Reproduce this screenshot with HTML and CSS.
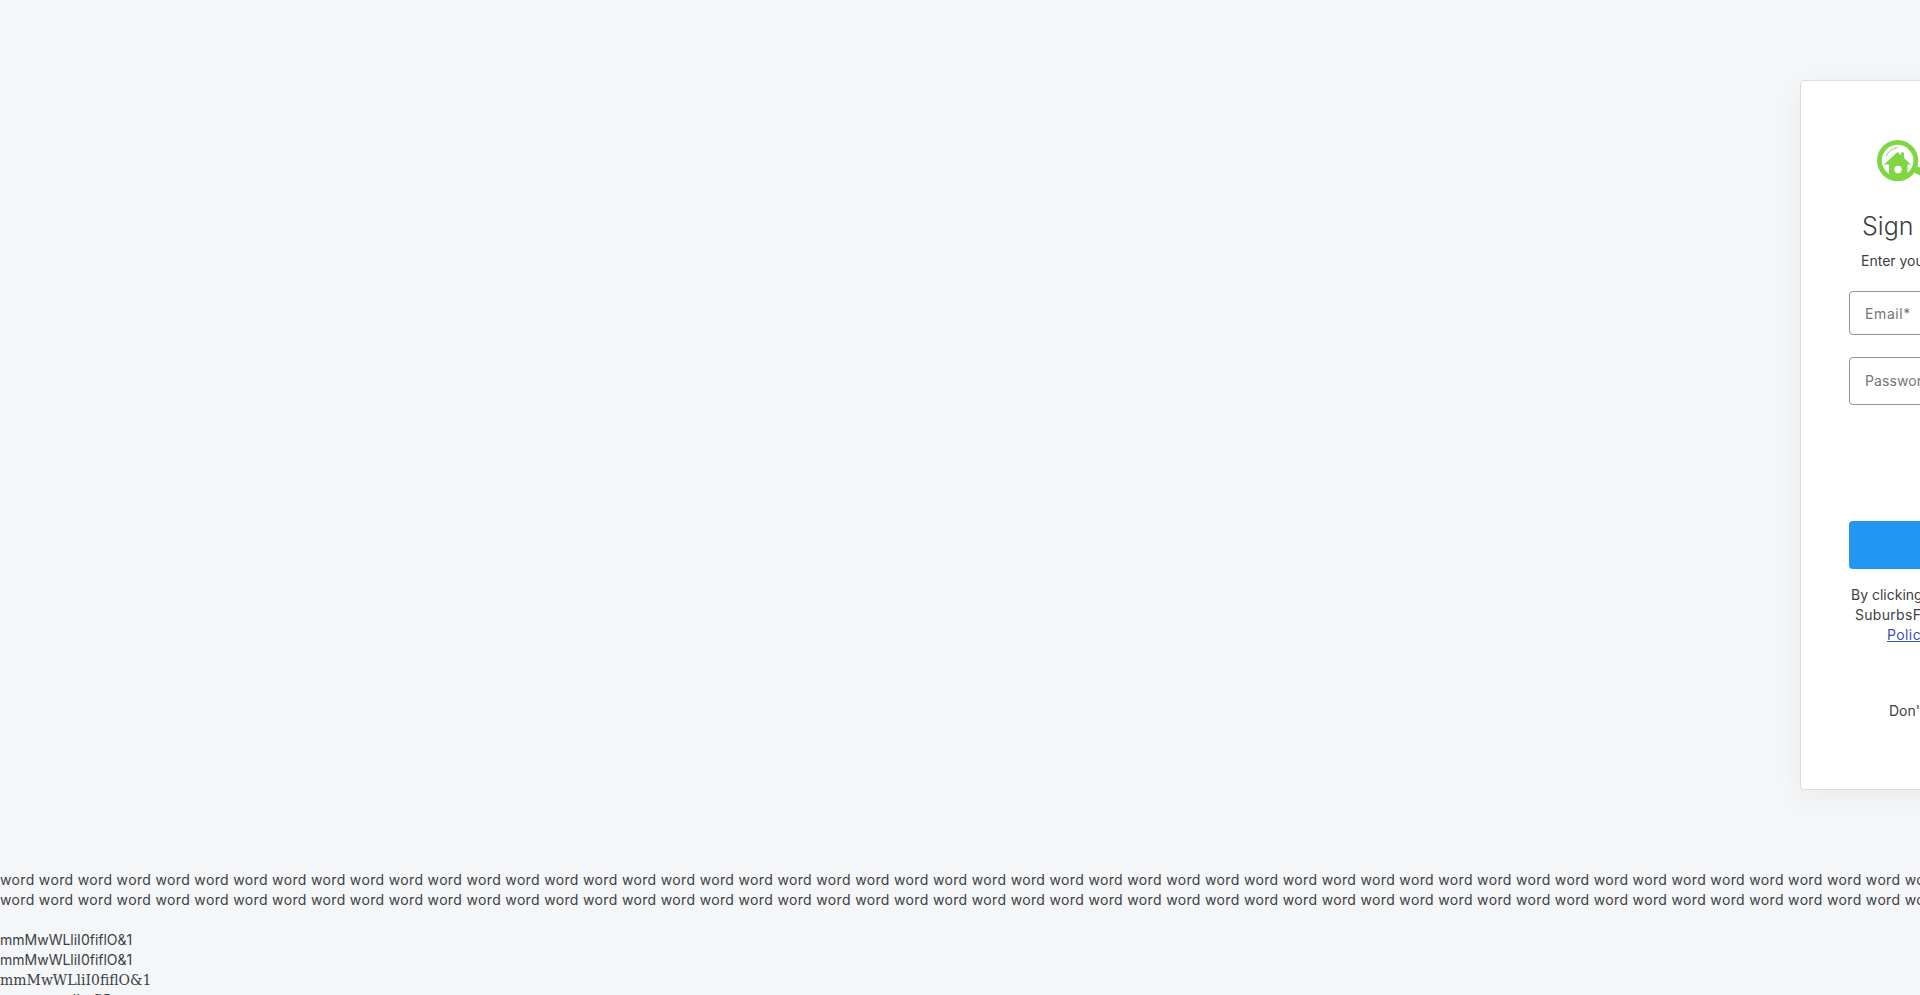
FILE: index.html
```
<!DOCTYPE html>
<html lang="en">
<head>
    <meta charset="UTF-8">
    <meta name="viewport" content="width=device-width, initial-scale=1.0">
    <title>Sign In</title>
    <link rel="stylesheet" href="styles.css">
</head>
<body>

<main class="page">
    <div class="card">
        <svg class="logo" width="60" height="42" viewBox="0 0 60 42">
            <path d="M37 25 L60 35 L60 44 L34 31 Z" fill="#7ed742"/>
            <circle cx="20.6" cy="20.6" r="18.2" fill="#fff" stroke="#7ed742" stroke-width="4.8"/>
            <path d="M7 24.5 L20.5 12 L24 15.2 V12.5 H27 V18 L34 24.5 H30.5 V36 Q20.5 41 12 36 V24.5 Z" fill="#7ed742"/>
            <circle cx="21" cy="29.5" r="3.7" fill="#fff"/>
            <path d="M9 16.5 Q12 9 20.5 7.5" fill="none" stroke="#7ed742" stroke-width="1"/>
        </svg>
        <h1 class="title">Sign In</h1>
        <p class="subtitle">Enter your details</p>
        <form class="form">
            <input type="email" class="input-field" placeholder="Email*">
            <input type="password" class="input-field password" placeholder="Password*">
            <button type="button" class="button" aria-label="Sign In"></button>
        </form>
        <div class="terms">
            <p class="terms-first">By clicking Sign In</p>
            <p class="terms-second">SuburbsFinder</p>
            <p class="terms-link"><a href="#">Policy</a></p>
        </div>
        <p class="signup">Don't have an account?</p>
    </div>
</main>

<!-- Font samples -->
<div class="words">
    <p>word word word word word word word word word word word word word word word word word word word word word word word word word word word word word word word word word word word word word word word word word word word word word word word word word word</p>
    <p>word word word word word word word word word word word word word word word word word word word word word word word word word word word word word word word word word word word word word word word word word word word word word word word word word word</p>
</div>
<div class="samples">
    <p class="sample">mmMwWLliI0fiflO&amp;1</p>
    <p class="sample">mmMwWLliI0fiflO&amp;1</p>
    <p class="sample-serif">mmMwWLliI0fiflO&amp;1</p>
    <p class="sample-sans">mmMwWLliI0fiflO&amp;1</p>
</div>

</body>
</html>
```

FILE: styles.css
```
* {
    box-sizing: border-box;
}
body {
    margin: 0;
    height: 995px;
    overflow: hidden;
    background-color: #f4f6f8;
    color: #3c4043;
    font-family: Inter, "Open Sans", sans-serif;
    font-size: 14px;
    line-height: 20px;
    white-space: nowrap;
}
h1, p {
    margin: 0;
}
.page {
    height: 870px;
    padding: 80px 0 0 1800px;
    overflow: hidden;
}
.card {
    width: 440px;
    height: 710px;
    padding: 59px 48px 0;
    background-color: #fff;
    border: 1px solid #dadce0;
    border-radius: 4px;
    box-shadow: 0 8px 24px rgba(60, 64, 67, 0.06);
}
.logo {
    display: block;
    margin-left: 28px;
}
.title {
    margin: 28px 0 0 13px;
    color: #3c4043;
    font-size: 25px;
    font-weight: 350;
    line-height: 32px;
}
.subtitle {
    margin: 9px 0 0 12px;
}
.form {
    display: flex;
    flex-direction: column;
    margin-top: 20px;
}
.input-field {
    height: 44px;
    padding: 0 15px;
    background-color: #fff;
    border: 1px solid #909297;
    border-radius: 4px;
    font: inherit;
    letter-spacing: 0.6px;
}
.input-field::placeholder {
    color: #757575;
}
.password {
    height: 48px;
    margin-top: 22px;
    padding-bottom: 2px;
    letter-spacing: 0.1px;
}
.button {
    height: 48px;
    margin-top: 116px;
    background-color: #2196f3;
    border: none;
    border-radius: 4px;
}
.terms {
    margin-top: 16px;
}
.terms-first {
    margin-left: 2px;
}
.terms-second {
    margin-left: 6px;
    letter-spacing: 0.3px;
}
.terms-link {
    margin-left: 38px;
    letter-spacing: 0.4px;
}
.terms-link a {
    color: #3f51b5;
}
.signup {
    margin: 56px 0 0 40px;
}
.words {
    letter-spacing: 0.345px;
}
.samples {
    margin-top: 20px;
}
.sample-serif {
    font-family: "DejaVu Serif", serif;
}
.sample-sans {
    font-family: "DejaVu Sans", sans-serif;
}
```
